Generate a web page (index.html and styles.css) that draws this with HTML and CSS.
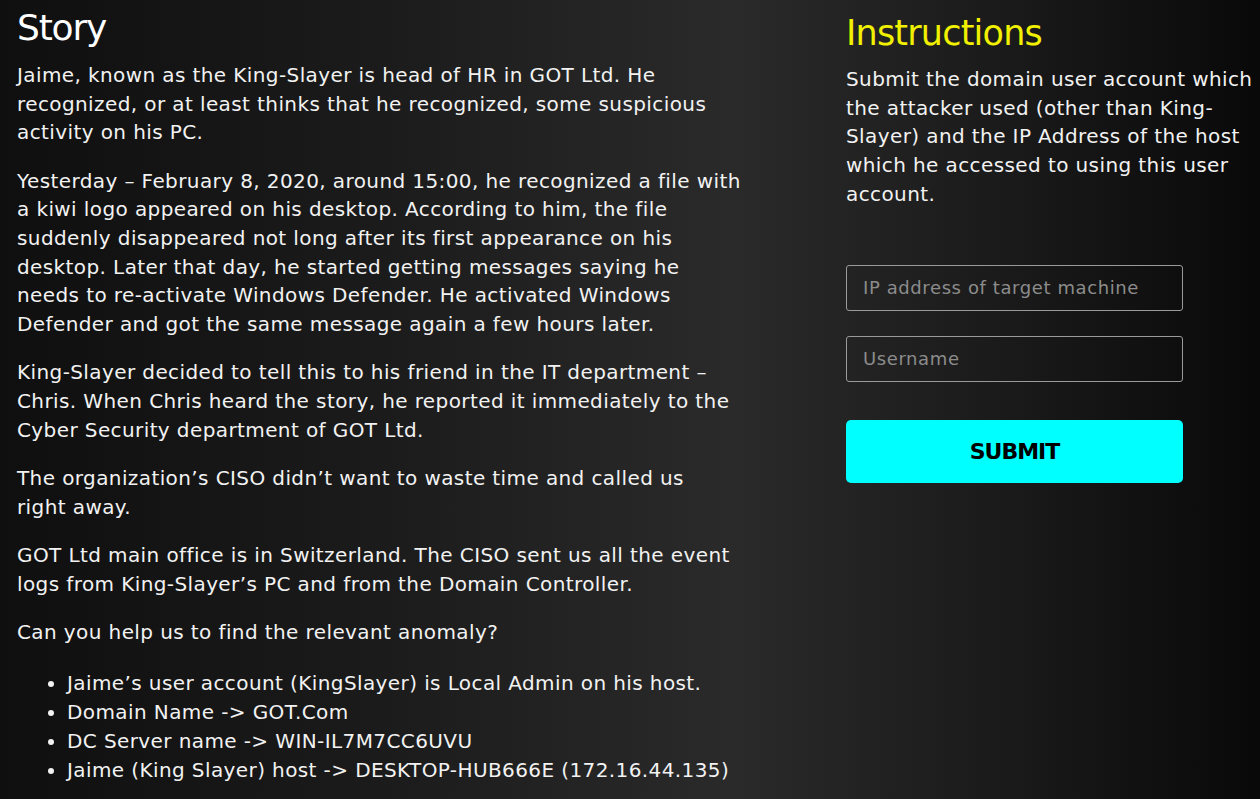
FILE: index.html
```html
<!DOCTYPE html>
<html lang="en">
<head>
<meta charset="utf-8">
<title>Story</title>
<link rel="stylesheet" href="styles.css">
</head>
<body>
<div class="page">
  <section class="story">
    <h1 class="story-title">Story</h1>
    <p>Jaime, known as the King-Slayer is head of HR in GOT Ltd. He recognized, or at least thinks that he recognized, some suspicious activity on his PC.</p>
    <p>Yesterday – February 8, 2020, around 15:00, he recognized a file with a kiwi logo appeared on his desktop. According to him, the file suddenly disappeared not long after its first appearance on his desktop. Later that day, he started getting messages saying he<br>needs to re-activate Windows Defender. He activated Windows Defender and got the same message again a few hours later.</p>
    <p>King-Slayer decided to tell this to his friend in the IT department – Chris. When Chris heard the story, he reported it immediately to the Cyber Security department of GOT Ltd.</p>
    <p>The organization’s CISO didn’t want to waste time and called us<br>right away.</p>
    <p>GOT Ltd main office is in Switzerland. The CISO sent us all the event logs from King-Slayer’s PC and from the Domain Controller.</p>
    <p>Can you help us to find the relevant anomaly?</p>
    <ul class="facts">
      <li>Jaime’s user account (KingSlayer) is Local Admin on his host.</li>
      <li>Domain Name -&gt; GOT.Com</li>
      <li>DC Server name -&gt; WIN-IL7M7CC6UVU</li>
      <li>Jaime (King Slayer) host -&gt; DESKTOP-HUB666E (172.16.44.135)</li>
    </ul>
  </section>
  <aside class="instructions">
    <h2 class="instr-title">Instructions</h2>
    <p>Submit the domain user account which the attacker used (other than King-Slayer) and the IP Address of the host which he accessed to using this user account.</p>
    <form class="answer-form">
      <input class="field" type="text" placeholder="IP address of target machine">
      <input class="field" type="text" placeholder="Username">
      <button class="submit" type="button">SUBMIT</button>
    </form>
  </aside>
</div>
</body>
</html>
```

FILE: styles.css
```css
html, body {
  margin: 0;
  padding: 0;
  height: 100%;
}
body {
  background: linear-gradient(90deg, #0f0f0f 0%, #1b1b1b 30%, #2a2a2a 58%, #1a1a1a 80%, #090909 100%);
  color: #f2f2f2;
  font-family: "DejaVu Sans", "Liberation Sans", sans-serif;
  font-size: 20px;
  line-height: 28.7px;
  letter-spacing: 0.4px;
  overflow: hidden;
}
.page {
  display: flex;
  padding: 0 0 0 17px;
}
.story {
  width: 726px;
  flex: none;
}
.story-title {
  font-weight: 400;
  font-size: 36px;
  line-height: 40px;
  letter-spacing: -1.2px;
  margin: 8px 0 13px;
  color: #ffffff;
}
.story p {
  margin: 0 0 19.5px;
}
.facts {
  margin: 23px 0 0;
  padding-left: 50px;
}
.instructions {
  margin-left: 103px;
  width: 410px;
  flex: none;
}
.instr-title {
  font-weight: 400;
  font-size: 35px;
  line-height: 40px;
  letter-spacing: -0.8px;
  margin: 13px 0 12px;
  color: #f0f000;
}
.instructions p {
  margin: 0;
}
.answer-form {
  display: flex;
  flex-direction: column;
  width: 337px;
  margin-top: 56px;
}
.field {
  height: 46px;
  box-sizing: border-box;
  background: transparent;
  border: 1.5px solid #9a9a9a;
  border-radius: 3px;
  padding: 0 16px;
  font-family: inherit;
  font-size: 18px;
  letter-spacing: 0.6px;
  color: #fff;
  margin-bottom: 25px;
}
.field::placeholder {
  color: #8c8c8c;
}
.submit {
  margin-top: 13px;
  height: 63px;
  border: none;
  border-radius: 5px;
  background: #00ffff;
  color: #000;
  font-family: inherit;
  font-weight: 700;
  font-size: 22px;
  letter-spacing: -1px;
  cursor: pointer;
}
```
